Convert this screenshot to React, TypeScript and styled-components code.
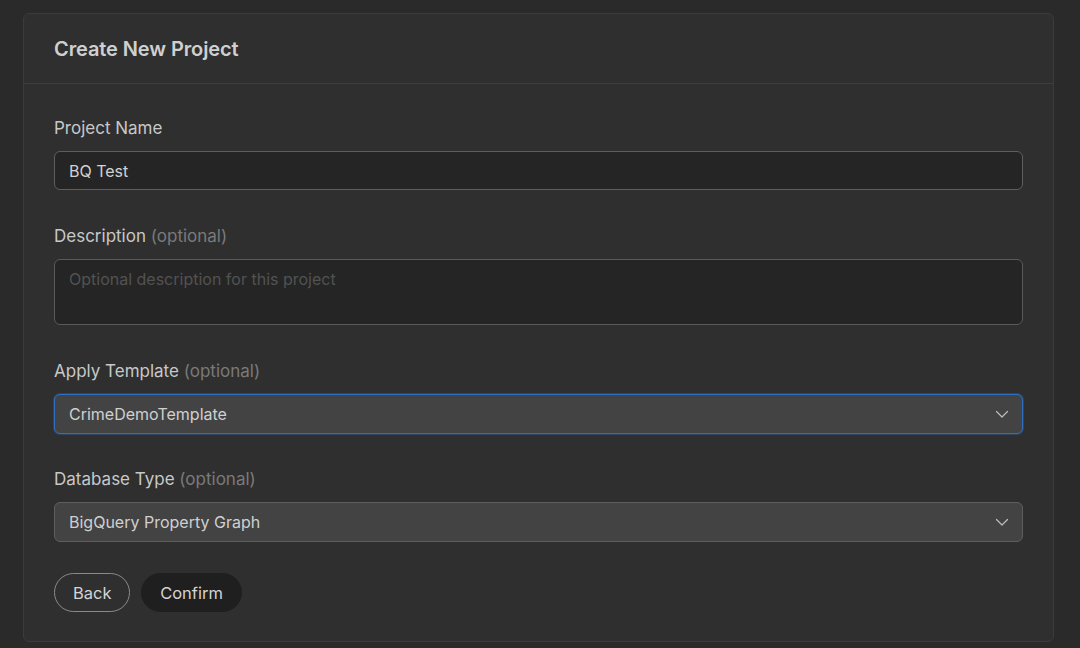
import React from "react";
import styled, { createGlobalStyle } from "styled-components";

const Global = createGlobalStyle`
  html, body { margin: 0; padding: 0; background: #2a2a2a; }
  body { font-family: Inter, "Noto Sans", "Liberation Sans", sans-serif; -webkit-font-smoothing: antialiased; }
  * { box-sizing: border-box; }
`;

const Page = styled.div`
  padding: 13px 26px 6px 23px;
  min-height: 648px;
`;

const Card = styled.div`
  background: #2f2f2f;
  border: 1px solid #3b3b3b;
  border-radius: 6px;
  display: flex;
  flex-direction: column;
`;

const Header = styled.div`
  height: 70px;
  padding: 0 30px;
  display: flex;
  align-items: center;
  border-bottom: 1px solid #3d3d3d;
`;

const Title = styled.h2`
  margin: 0;
  font-size: 20px;
  font-weight: 600;
  color: #cfcfcf;
  letter-spacing: -0.1px;
`;

const Body = styled.div`
  padding: 31px 30px 29px;
  display: flex;
  flex-direction: column;
  gap: 33px;
`;

const Field = styled.div<{ $tight?: boolean }>`
  display: flex;
  flex-direction: column;
  gap: 11px;
  margin-top: ${(p) => (p.$tight ? "-1px" : "0")};
`;

const Label = styled.label`
  padding-top: 1px;
  font-size: 17px;
  line-height: 24px;
  color: #c8c8c8;
`;

const Optional = styled.span`
  color: #7a7a7a;
`;

const TextInput = styled.div`
  height: 39px;
  border: 1px solid #5e5e5e;
  border-radius: 6px;
  background: #252525;
  padding: 0 14px;
  display: flex;
  align-items: center;
  font-size: 16px;
  color: #d2d2d2;
`;

const TextArea = styled.div`
  height: 66px;
  border: 1px solid #5a5a5a;
  border-radius: 6px;
  background: #252525;
  padding: 8px 14px;
  font-size: 16px;
  line-height: 22px;
  color: #525252;
`;

const Select = styled.div<{ $focused?: boolean }>`
  height: 40px;
  border: 1px solid ${(p) => (p.$focused ? "#2e6fc4" : "#5e5e5e")};
  box-shadow: ${(p) => (p.$focused ? "0 0 0 1px rgba(46,111,196,0.35)" : "none")};
  border-radius: 6px;
  background: #434343;
  padding: 0 14px;
  display: flex;
  align-items: center;
  justify-content: space-between;
  font-size: 16px;
  color: #d0d0d0;
`;

const Chevron = styled.svg`
  width: 14px;
  height: 14px;
  margin-right: -1px;
`;

const Actions = styled.div`
  display: flex;
  gap: 11px;
  margin-top: -2px;
`;

const Button = styled.button<{ $variant: "outline" | "solid" }>`
  height: 39px;
  border-radius: 20px;
  font-family: inherit;
  font-size: 16.5px;
  color: #d4d4d4;
  padding: 0 18px;
  cursor: pointer;
  border: 1px solid ${(p) => (p.$variant === "outline" ? "#8a8a8a" : "#1f1f1f")};
  background: ${(p) => (p.$variant === "outline" ? "transparent" : "#1f1f1f")};
`;

const ChevronIcon = () => (
  <Chevron viewBox="0 0 14 14" fill="none">
    <path d="M1.5 4.5 L7 10 L12.5 4.5" stroke="#bdbdbd" strokeWidth="1.2" strokeLinecap="round" strokeLinejoin="round" />
  </Chevron>
);

export default function App() {
  return (
    <>
      <Global />
      <Page>
        <Card>
          <Header>
            <Title>Create New Project</Title>
          </Header>
          <Body>
            <Field>
              <Label>Project Name</Label>
              <TextInput>BQ Test</TextInput>
            </Field>
            <Field>
              <Label>
                Description <Optional>(optional)</Optional>
              </Label>
              <TextArea>Optional description for this project</TextArea>
            </Field>
            <Field>
              <Label>
                Apply Template <Optional>(optional)</Optional>
              </Label>
              <Select $focused>
                <span>CrimeDemoTemplate</span>
                <ChevronIcon />
              </Select>
            </Field>
            <Field $tight>
              <Label>
                Database Type <Optional>(optional)</Optional>
              </Label>
              <Select>
                <span>BigQuery Property Graph</span>
                <ChevronIcon />
              </Select>
            </Field>
            <Actions>
              <Button $variant="outline" style={{ width: 76 }}>Back</Button>
              <Button $variant="solid" style={{ width: 101 }}>Confirm</Button>
            </Actions>
          </Body>
        </Card>
      </Page>
    </>
  );
}
